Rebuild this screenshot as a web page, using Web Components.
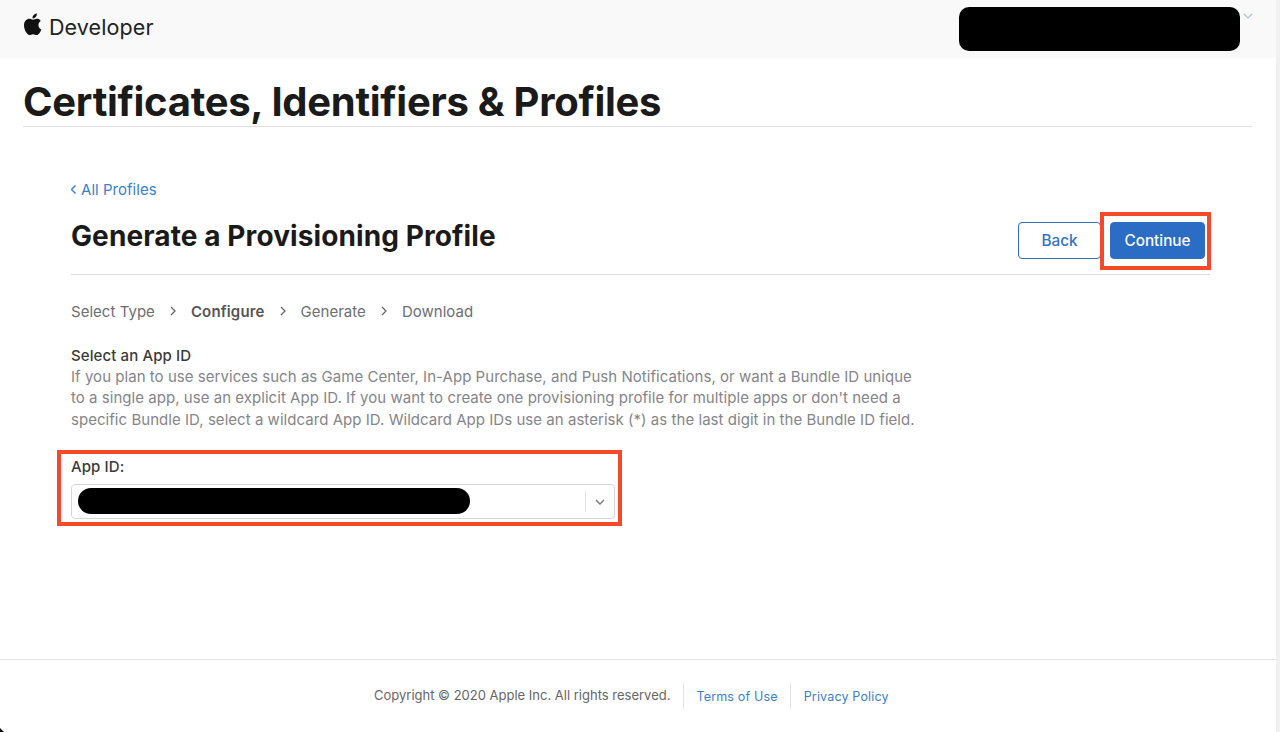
<!DOCTYPE html>
<html lang="en">
<head>
<meta charset="utf-8">
<title>Certificates, Identifiers & Profiles</title>
<style>
  html, body { margin: 0; height: 100%; background: #fff; }
  body { font-family: Inter, "Liberation Sans", sans-serif; overflow: hidden; }
</style>
</head>
<body>
<dev-page>
  <dev-header slot="header"></dev-header>
  <h1 slot="title">Certificates, Identifiers &amp; Profiles</h1>
  <profile-heading slot="main"></profile-heading>
  <step-list slot="main"></step-list>
  <app-id-section slot="main"></app-id-section>
  <dev-footer slot="footer"></dev-footer>
</dev-page>

<script>
class DevPage extends HTMLElement {
  constructor() {
    super();
    this.attachShadow({ mode: "open" });
    this.shadowRoot.innerHTML = `
      <style>
        :host { display: flex; flex-direction: column; height: 732px; width: 1280px; box-sizing: border-box; border-right: 4px solid #f1f1f1; position: relative; }
        :host::after { content: ""; position: absolute; left: 0; bottom: 0; width: 5px; height: 5px; background: linear-gradient(45deg, #111 30%, transparent 50%); }
        .title { margin: 0 24px 0 23px; height: 69px; border-bottom: 1px solid #e0e0e0; box-sizing: border-box; }
        ::slotted(h1) { margin: 0; padding-top: 19px; font-size: 40px; line-height: 50px; font-weight: 700; letter-spacing: -.28px; color: #1a1a1a; }
        main { flex: 1; padding: 52px 66px 0 71px; }
      </style>
      <slot name="header"></slot>
      <div class="title"><slot name="title"></slot></div>
      <main><slot name="main"></slot></main>
      <slot name="footer"></slot>`;
  }
}

class DevHeader extends HTMLElement {
  constructor() {
    super();
    this.attachShadow({ mode: "open" });
    this.shadowRoot.innerHTML = `
      <style>
        :host { display: flex; align-items: flex-start; height: 58px; background: #f9f9f9; padding-left: 24px; }
        svg.logo { width: 19px; height: 23px; margin-top: 13px; fill: #111; }
        .name { margin: 15px 0 0 6px; font-size: 21.5px; line-height: 24px; letter-spacing: .1px; color: #222; }
        .account { margin-left: auto; display: flex; margin-right: 23px; margin-top: 7px; }
        .redact { width: 281px; height: 44px; background: #000; border-radius: 10px; }
        .chev { width: 10px; height: 6px; margin: 6px 0 0 3px; fill: none; stroke: #a9c3e6; stroke-width: 1.2; }
      </style>
      <svg class="logo" viewBox="0 0 170 200"><path d="M150 68c-1 1-21 12-21 37 0 29 25 39 26 39 0 1-4 14-13 27-8 12-17 24-30 24s-16-8-31-8c-15 0-20 8-32 8s-20-11-30-25C8 154 0 129 0 106c0-38 25-58 49-58 13 0 24 9 32 9 8 0 20-9 35-9 6 0 25 1 34 20zM105 33c6-7 10-17 10-27 0-1 0-3-1-4-10 0-21 6-27 14-6 6-11 16-11 26 0 2 0 3 1 3 1 0 2 1 3 1 9 0 19-6 25-13z"/></svg>
      <span class="name">Developer</span>
      <div class="account">
        <div class="redact"></div>
        <svg class="chev" viewBox="0 0 10 6"><path d="M1 1l4 4 4-4"/></svg>
      </div>`;
  }
}

class ProfileHeading extends HTMLElement {
  constructor() {
    super();
    this.attachShadow({ mode: "open" });
    this.shadowRoot.innerHTML = `
      <style>
        :host { display: block; height: 95px; border-bottom: 1px solid #dcdcdc; }
        .back { display: flex; align-items: center; gap: 5px; height: 20px; font-size: 15px; letter-spacing: .03px; color: #3a7fd0; }
        .row { display: flex; align-items: flex-start; justify-content: space-between; margin-top: 21px; }
        h2 { margin: 0; font-size: 28px; line-height: 32px; font-weight: 700; letter-spacing: .1px; color: #1a1a1a; }
        .actions { display: flex; gap: 9px; margin: 2px 5px 0 0; position: relative; }
        button { width: 83px; height: 37px; box-sizing: border-box; border-radius: 4px; border: 1px solid #2f6fc4; background: #fff; color: #3373c8; font: 500 15.3px Inter, "Liberation Sans", sans-serif; padding: 0; }
        button.primary { width: 95px; background: #2b6cc4; color: #fff; }
        .mark { position: absolute; left: 82px; top: -10px; right: -6px; bottom: -11px; border: 4px solid #f54a2a; }
        svg { width: 5px; height: 9px; fill: none; stroke: #3a7fd0; stroke-width: 1.4; }
      </style>
      <a class="back"><svg viewBox="0 0 5 9"><path d="M4.5 .5l-4 4 4 4"/></svg>All Profiles</a>
      <div class="row">
        <h2>Generate a Provisioning Profile</h2>
        <div class="actions">
          <button>Back</button>
          <button class="primary">Continue</button>
          <div class="mark"></div>
        </div>
      </div>`;
  }
}

class StepList extends HTMLElement {
  constructor() {
    super();
    this.attachShadow({ mode: "open" });
    const steps = ["Select Type", "Configure", "Generate", "Download"];
    const chev = `<svg viewBox="0 0 6 10"><path d="M1 1l4 4-4 4"/></svg>`;
    this.shadowRoot.innerHTML = `
      <style>
        :host { display: flex; align-items: center; gap: 15px; margin-top: 26px; height: 20px; font-size: 15px; letter-spacing: .03px; color: #6e6e73; }
        b { font-weight: 600; color: #555; letter-spacing: .15px; }
        svg { width: 6px; height: 10px; fill: none; stroke: #666; stroke-width: 1.3; }
      </style>
      ${steps.map(s => s === "Configure" ? `<b>${s}</b>` : `<span>${s}</span>`).join(chev)}`;
  }
}

class AppIdSection extends HTMLElement {
  constructor() {
    super();
    this.attachShadow({ mode: "open" });
    this.shadowRoot.innerHTML = `
      <style>
        :host { display: block; margin-top: 26px; position: relative; color: #85858a; font-size: 15px; line-height: 21.5px; }
        h3 { margin: 0; font-size: 15px; line-height: 18px; font-weight: 500; letter-spacing: .1px; color: #3a3a3a; }
        p { margin: 0; padding-top: .5px; width: 856px; letter-spacing: .04px; }
        label { display: block; margin-top: 27px; font-size: 15px; font-weight: 500; letter-spacing: .1px; color: #3a3a3a; line-height: 20px; }
        .select { position: relative; display: flex; align-items: center; width: 544px; height: 35px; margin-top: 7px; box-sizing: border-box; border: 1px solid #d6d6d6; border-radius: 4px; background: #fff; }
        .redact { position: absolute; left: 6px; top: 3px; width: 392px; height: 26px; border-radius: 13px; background: #000; }
        .arrow { margin-left: auto; width: 28px; height: 21px; border-left: 1px solid #e2e2e2; display: grid; place-items: center; }
        .arrow svg { width: 10px; height: 6px; fill: none; stroke: #777; stroke-width: 1.4; }
        .mark { position: absolute; left: -14px; top: 103px; width: 565px; height: 76px; box-sizing: border-box; border: 4px solid #f54a2a; }
      </style>
      <h3>Select an App ID</h3>
      <p>If you plan to use services such as Game Center, In-App Purchase, and Push Notifications, or want a Bundle ID unique to a single app, use an explicit App ID. If you want to create one provisioning profile for multiple apps or don't need a specific Bundle ID, select a wildcard App ID. Wildcard App IDs use an asterisk (*) as the last digit in the Bundle ID field.</p>
      <label>App ID:</label>
      <div class="select">
        <div class="redact"></div>
        <div class="arrow"><svg viewBox="0 0 10 6"><path d="M1 1l4 4 4-4"/></svg></div>
      </div>
      <div class="mark"></div>`;
  }
}

class DevFooter extends HTMLElement {
  constructor() {
    super();
    this.attachShadow({ mode: "open" });
    this.shadowRoot.innerHTML = `
      <style>
        :host { display: flex; align-items: flex-start; height: 73px; border-top: 1px solid #e2e2e2; box-sizing: border-box; padding: 23px 0 0 374px; font-size: 13px; line-height: 24px; color: #666; }
        a { color: #3a7fd0; font-size: 12.5px; padding: 2px 12.5px 0; height: 24px; border-left: 1px solid #e2e2e2; letter-spacing: .17px; }
        span { padding-right: 12.5px; }
      </style>
      <span>Copyright © 2020 Apple Inc. All rights reserved.</span>
      <a>Terms of Use</a>
      <a>Privacy Policy</a>`;
  }
}

customElements.define("dev-page", DevPage);
customElements.define("dev-header", DevHeader);
customElements.define("profile-heading", ProfileHeading);
customElements.define("step-list", StepList);
customElements.define("app-id-section", AppIdSection);
customElements.define("dev-footer", DevFooter);
</script>
</body>
</html>
